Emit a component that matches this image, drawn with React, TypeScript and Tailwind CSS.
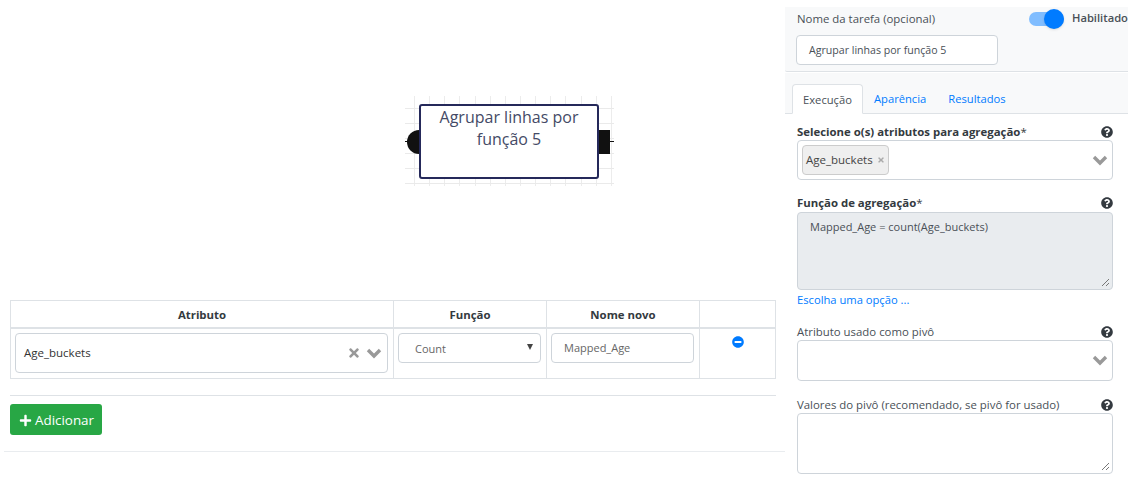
import { FaMinusCircle, FaPlus, FaQuestionCircle, FaTimes } from "react-icons/fa";

const columnLines = [0, 1, 2, 3, 4, 5, 6, 7, 8, 9, 10, 11, 12, 13];
const rowLines = [0, 1, 2, 3, 4, 5];

function Chevron() {
  return (
    <svg width="16" height="11" viewBox="0 0 16 11" className="shrink-0">
      <path d="M2 2 L8 8 L14 2" stroke="#999" strokeWidth="3.4" fill="none" />
    </svg>
  );
}

function ResizeGrip() {
  return (
    <svg width="9" height="9" viewBox="0 0 9 9" className="absolute right-[2px] bottom-[2px]">
      <path d="M1 8 L8 1 M5 8 L8 5" stroke="#777" strokeWidth="1" fill="none" />
    </svg>
  );
}

function FieldLabel({ text, bold, star }: { text: string; bold?: boolean; star?: boolean }) {
  return (
    <div className="flex items-center justify-between h-[16px]">
      <span className={bold ? "text-[11.4px] font-bold text-[#343a40]" : "text-[11.4px] text-[#495057]"}>
        {text}
        {star && <span className="font-normal">*</span>}
      </span>
      <FaQuestionCircle size={12} className="text-[#343a40]" />
    </div>
  );
}

function TaskNode() {
  return (
    <div className="relative w-[211px] h-[90px]">
      {/* grid lines behind the task */}
      <div className="absolute left-[11px] top-0 w-[198px] h-[90px] flex justify-between">
        {columnLines.map((n) => (
          <div key={n} className="w-px h-full bg-[#ececec]" />
        ))}
      </div>
      <div className="absolute left-[2px] top-[12px] w-[209px] h-[76px] flex flex-col justify-between">
        {rowLines.map((n) => (
          <div key={n} className="h-px w-full bg-[#eaeaea]" />
        ))}
      </div>
      <div className="absolute left-[4px] top-[34px] w-[20px] h-[24px] rounded-l-full bg-[#111]" />
      <div className="absolute left-[2px] top-[45px] w-[6px] h-px bg-[#111]" />
      <div className="absolute left-[190px] top-[34px] w-[17px] h-[24px] bg-[#111]" />
      <div className="absolute left-[200px] top-[45px] w-[11px] h-px bg-[#111]" />
      <div className="absolute left-[16px] top-[8px] w-[180px] h-[75px] bg-white border-2 border-[#25295a] rounded-[3px] text-center text-[16px] leading-[22px] text-[#444a66]">
        <div className="px-2">Agrupar linhas por função 5</div>
      </div>
    </div>
  );
}

export default function App() {
  return (
    <div className="flex w-[1132px] h-[485px] overflow-hidden bg-white font-['Open_Sans',sans-serif]">
      {/* ── Left: canvas + table ── */}
      <div className="w-[785px] shrink-0">
        <div className="h-[300px] pt-[96px] pl-[403px]">
          <TaskNode />
        </div>

        <div className="ml-[10px] w-[766px] border border-[#dee2e6]">
          <div className="grid grid-cols-[382px_153px_153px_1fr] h-[28px] border-b-2 border-[#dee2e6] text-[11.4px] font-bold text-[#343a40] text-center leading-[27px]">
            <div>Atributo</div>
            <div className="border-l border-[#dee2e6]">Função</div>
            <div className="border-l border-[#dee2e6]">Nome novo</div>
            <div className="border-l border-[#dee2e6]" />
          </div>
          <div className="grid grid-cols-[382px_153px_153px_1fr] h-[49px] text-[11px] text-[#495057]">
            <div className="pl-[4px] pt-[4px]">
              <div className="flex items-center justify-between w-[373px] h-[40px] border border-[#ced4da] rounded-[4px] pl-[8px] pr-[5px]">
                <span className="text-[11.5px] text-[#333]">Age_buckets</span>
                <div className="flex items-center gap-[5px] text-[#999]">
                  <FaTimes size={14} />
                  <Chevron />
                </div>
              </div>
            </div>
            <div className="border-l border-[#dee2e6] pl-[4px] pt-[4px]">
              <div className="relative w-[143px] h-[30px] border border-[#ced4da] rounded-[4px] pl-[16px] leading-[30px] text-[#666]">
                Count
                <span className="absolute right-[7px] top-[10px] w-0 h-0 border-x-[3.5px] border-x-transparent border-t-[6px] border-t-[#444]" />
              </div>
            </div>
            <div className="border-l border-[#dee2e6] pl-[4px] pt-[4px]">
              <div className="w-[143px] h-[30px] border border-[#ced4da] rounded-[4px] pl-[12px] leading-[28px] text-[#666]">
                Mapped_Age
              </div>
            </div>
            <div className="border-l border-[#dee2e6] flex justify-center pt-[7px]">
              <FaMinusCircle size={12} className="text-[#007bff]" />
            </div>
          </div>
        </div>

        <div className="ml-[10px] w-[766px] mt-[16px] border-t border-[#dee2e6]" />
        <button className="ml-[10px] mt-[8px] flex items-center gap-[3px] w-[92px] h-[31px] pt-[1px] pl-[9px] rounded-[3px] bg-[#28a745] text-white text-[13.4px]">
          <FaPlus size={13} />
          Adicionar
        </button>
        <div className="ml-[4px] mt-[16px] border-t border-[#e9ecef]" />
      </div>

      {/* ── Right: task properties ── */}
      <div className="flex-1 pt-[7px]">
        <div className="h-[65px] bg-[#f8f9fa] border-b border-[#dee2e6] rounded-bl-[2px] pl-[11px] mr-[4px]">
          <div className="flex items-center h-[22px] pt-[1px]">
            <span className="text-[11.4px] text-[#495057] w-[233px] pl-[1px]">Nome da tarefa (opcional)</span>
            <div className="relative w-[35px] h-[14px] rounded-full bg-[#80bdff]">
              <span className="absolute right-0 top-[-3px] w-[20px] h-[20px] rounded-full bg-[#007bff] shadow" />
            </div>
            <span className="ml-[8px] text-[11.2px] font-semibold text-[#495057]">Habilitado</span>
          </div>
          <div className="mt-[6px] w-[202px] h-[30px] bg-white border border-[#ced4da] rounded-[4px] pl-[12px] leading-[28px] text-[10.6px] text-[#495057]">
            Agrupar linhas por função 5
          </div>
        </div>

        <div className="mt-[1px] h-[41px] bg-[#f8f9fa] border-b border-[#dee2e6] mr-[4px] flex items-end pl-[7px] text-[11.2px]">
          <div className="w-[71px] h-[30px] -mb-px bg-white border border-b-white border-[#dee2e6] rounded-t-[4px] text-center leading-[30px] text-[#495057]">
            Execução
          </div>
          <div className="ml-[11px] h-[29px] leading-[29px] text-[#007bff]">Aparência</div>
          <div className="ml-[22px] h-[29px] leading-[29px] text-[#007bff]">Resultados</div>
        </div>

        <div className="ml-[12px] w-[316px] pt-[10px]">
          <FieldLabel text="Selecione o(s) atributos para agregação" bold star />
          <div className="h-[40px] flex items-center justify-between border border-[#ced4da] rounded-[4px] pl-[4px] pr-[4px]">
            <div className="flex items-center gap-[4px] h-[30px] w-[87px] pl-[3px] bg-[#efefef] border border-[#ccc] rounded-[4px] text-[11.5px] text-[#444]">
              Age_buckets
              <FaTimes size={8} className="text-[#aaa]" />
            </div>
            <Chevron />
          </div>

          <div className="mt-[15px]">
            <FieldLabel text="Função de agregação" bold star />
          </div>
          <div className="relative mt-[1px] h-[78px] bg-[#e9ecef] border border-[#ced4da] rounded-[4px] pl-[12px] pt-[6px] text-[11px] text-[#495057]">
            Mapped_Age = count(Age_buckets)
            <ResizeGrip />
          </div>
          <div className="mt-[2px] h-[16px] text-[11.2px] leading-[16px] text-[#007bff]">Escolha uma opção ...</div>

          <div className="mt-[16px]">
            <FieldLabel text="Atributo usado como pivô" />
          </div>
          <div className="h-[41px] flex items-center justify-end border border-[#ced4da] rounded-[4px] pr-[4px]">
            <Chevron />
          </div>

          <div className="mt-[16px]">
            <FieldLabel text="Valores do pivô (recomendado, se pivô for usado)" />
          </div>
          <div className="relative h-[61px] bg-white border border-[#ced4da] rounded-[4px]">
            <ResizeGrip />
          </div>
        </div>
      </div>
    </div>
  );
}
